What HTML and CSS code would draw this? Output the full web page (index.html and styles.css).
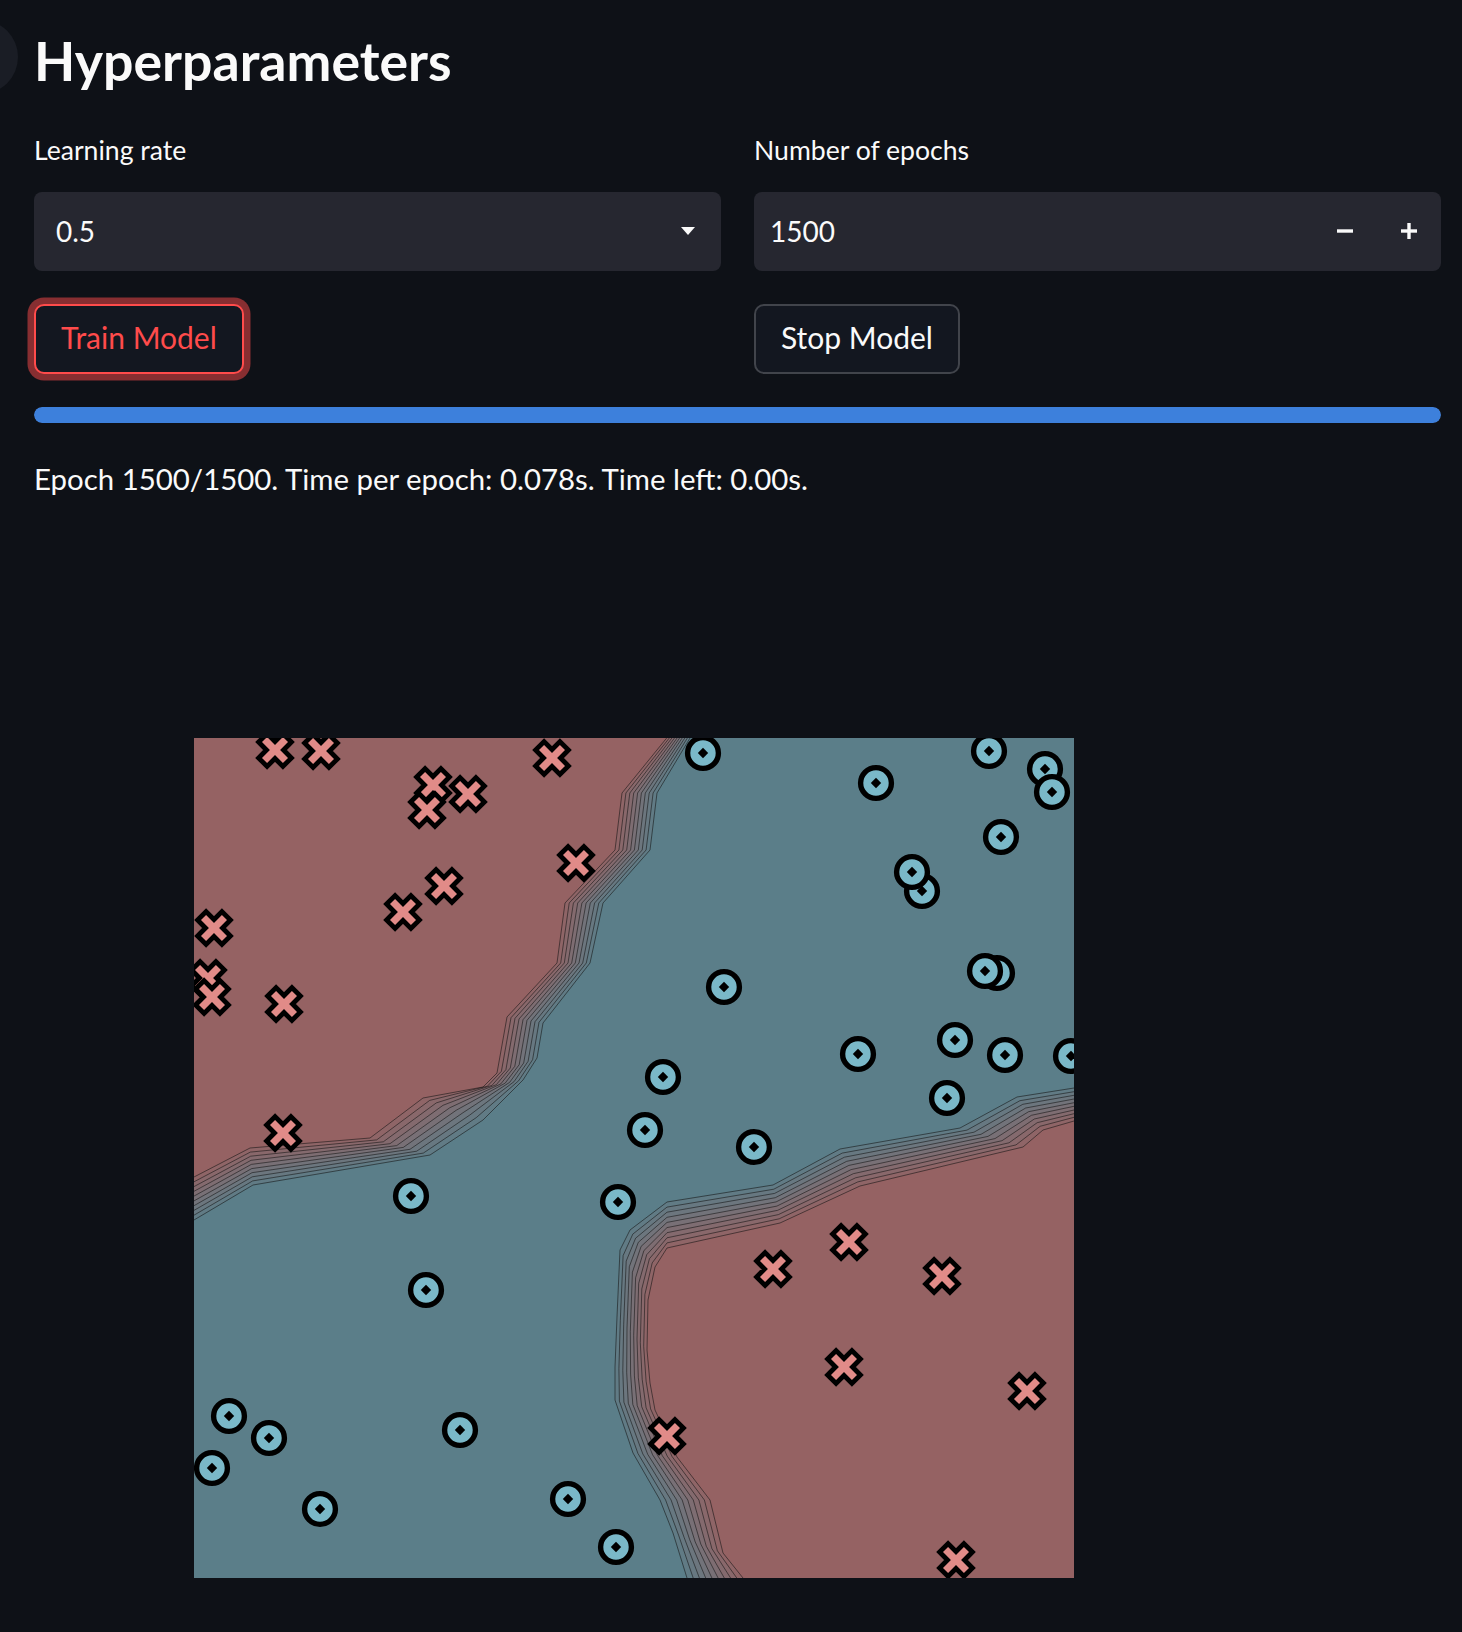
FILE: index.html
```html
<!DOCTYPE html>
<html lang="en">
<head>
<meta charset="utf-8">
<title>Hyperparameters</title>
<link rel="stylesheet" href="styles.css">
</head>
<body>
<div class="app">
  <div class="side-toggle"></div>
  <main class="main">
    <h1 class="title">Hyperparameters</h1>
    <div class="cols">
      <div class="col">
        <label class="label">Learning rate</label>
        <div class="field select">
          <span class="value">0.5</span>
          <svg class="caret" width="14" height="8" viewBox="0 0 14 8"><path d="M0 0H14L7 8Z" fill="#fafafa"/></svg>
        </div>
      </div>
      <div class="col">
        <label class="label">Number of epochs</label>
        <div class="field number">
          <span class="value">1500</span>
          <div class="steppers">
            <span class="step"><svg width="16" height="16" viewBox="0 0 16 16"><rect x="0" y="6.3" width="16" height="3.4" fill="#fafafa"/></svg></span>
            <span class="step"><svg width="16" height="16" viewBox="0 0 16 16"><rect x="0" y="6.3" width="16" height="3.4" fill="#fafafa"/><rect x="6.3" y="0" width="3.4" height="16" fill="#fafafa"/></svg></span>
          </div>
        </div>
      </div>
    </div>
    <div class="cols buttons">
      <div class="col"><button class="btn btn-focus" type="button">Train Model</button></div>
      <div class="col"><button class="btn" type="button">Stop Model</button></div>
    </div>
    <div class="progress"><div class="progress-fill" style="width:100%"></div></div>
    <p class="status">Epoch 1500/1500. Time per epoch: 0.078s. Time left: 0.00s.</p>
    <div class="figure">
      <svg id="plot" class="plot" width="880" height="840" viewBox="0 0 880 840">
        <defs>
          <g id="mx">
            <path d="M3.6-14.8V-3.6H14.8V3.6H3.6V14.8H-3.6V3.6H-14.8V-3.6H-3.6V-14.8Z" transform="rotate(45)" fill="#e18b88" stroke="#000" stroke-width="9.6" stroke-linejoin="miter" paint-order="stroke"/>
          </g>
          <g id="mo">
            <circle r="15.4" fill="#7ab8c8" stroke="#000" stroke-width="5.4"/>
            <path d="M0-5.2L5.2 0 0 5.2-5.2 0Z" fill="#000"/>
          </g>
        </defs>
        <g id="regions"></g>
        <g id="contours"></g>
        <g id="markers"></g>
      </svg>
    </div>
  </main>
</div>
<script src="script.js"></script>
</body>
</html>
```

FILE: styles.css
```css
* {
  box-sizing: border-box;
  margin: 0;
  padding: 0;
}

html,
body {
  background: #0e1117;
}

body {
  width: 1462px;
  min-height: 1632px;
  font-family: Lato, "Noto Sans", sans-serif;
  color: #fafafa;
  position: relative;
  overflow: hidden;
}

.side-toggle {
  position: absolute;
  left: -56px;
  top: 20px;
  width: 74px;
  height: 74px;
  border-radius: 50%;
  background: #1a1d25;
}

.main {
  padding: 29px 21px 0 34px;
}

.title {
  font-size: 53.6px;
  font-weight: 700;
  line-height: 62px;
}

.cols {
  display: grid;
  grid-template-columns: 1fr 1fr;
  column-gap: 33px;
  margin-top: 42px;
}

.label {
  display: block;
  font-size: 26.6px;
  line-height: 34px;
}

.field {
  margin-top: 24.5px;
  height: 79px;
  background: #262730;
  border-radius: 8px;
  display: flex;
  align-items: center;
  font-size: 28px;
}

.select {
  padding: 0 26px 0 22px;
  justify-content: space-between;
}

.number {
  padding-left: 16px;
  justify-content: space-between;
}

.caret {
  display: block;
}

.steppers {
  display: flex;
  height: 100%;
}

.step {
  width: 64px;
  height: 100%;
  display: flex;
  align-items: center;
  justify-content: center;
}

.step svg {
  display: block;
}

.buttons {
  margin-top: 33px;
}

.btn {
  height: 70px;
  padding: 0 25px 3px;
  border: 2px solid rgba(250, 250, 250, 0.2);
  background: #131720;
  color: #fafafa;
  font-family: inherit;
  font-size: 30px;
  border-radius: 10px;
}

.btn-focus {
  border-color: #ff4b4b;
  color: #ff4b4b;
  box-shadow: 0 0 0 6.5px rgba(255, 75, 75, 0.5);
}

.progress {
  margin-top: 33px;
  height: 16px;
  border-radius: 8px;
  background: #262730;
  overflow: hidden;
}

.progress-fill {
  height: 100%;
  background: #3d80dc;
  border-radius: 8px;
}

.status {
  margin-top: 36px;
  font-size: 29.4px;
  line-height: 40px;
}

.figure {
  margin-top: 239px;
  padding-left: 160px;
}

.plot {
  display: block;
  overflow: hidden;
}
```

FILE: script.js
```js
(function () {
  var NS = 'http://www.w3.org/2000/svg';
  var RED = [149, 98, 99];
  var BLUE = [91, 126, 137];
  var N = 10;

  function el(tag, attrs, parent) {
    var e = document.createElementNS(NS, tag);
    for (var k in attrs) e.setAttribute(k, attrs[k]);
    parent.appendChild(e);
    return e;
  }
  function col(t) {
    return 'rgb(' + RED.map(function (c, i) { return Math.round(c + (BLUE[i] - c) * t); }).join(',') + ')';
  }
  function lerpLine(a, b, t) {
    return a.map(function (p, i) { return [p[0] + (b[i][0] - p[0]) * t, p[1] + (b[i][1] - p[1]) * t]; });
  }
  function pathD(pts) {
    return 'M' + pts.map(function (p) { return p[0].toFixed(1) + ' ' + p[1].toFixed(1); }).join('L');
  }

  var bands = [
    {
      red: [[521,-60],[472.7,0],[428,55],[421,112],[371,165],[363,225],[313,279],[303,335],[289,349],[229,360],[176,400],[56,410],[0,439],[-60,470]],
      blue: [[532,-60],[496,0],[463,55],[456,112],[409,165],[396,225],[349,285],[343,320],[329,342],[289,382],[236,417],[59,447],[0,482],[-60,517]],
      corner: [-120, -120]
    },
    {
      red: [[930,368],[880,383],[849,392],[829,409],[666,448],[586,485],[473,510],[461,529],[454,562],[453,612],[456,645],[461,672],[483,719],[516,762],[529,815],[549,840],[589,890]],
      blue: [[930,342],[880,350],[823,359],[766,390],[646,411],[579,447],[473,464],[436,492],[426,512],[423,579],[421,629],[421,662],[439,715],[466,762],[479,795],[493,840],[508,890]],
      corner: [1000, 960]
    }
  ];

  var regions = document.getElementById('regions');
  var contours = document.getElementById('contours');
  var markers = document.getElementById('markers');

  el('rect', { x: 0, y: 0, width: 880, height: 840, fill: col(1) }, regions);

  bands.forEach(function (b) {
    var lines = [];
    for (var k = 0; k < N; k++) lines.push(lerpLine(b.red, b.blue, k / (N - 1)));
    for (var j = N - 1; j >= 0; j--) {
      el('path', { d: pathD(lines[j].concat([b.corner])) + 'Z', fill: col(j / N) }, regions);
    }
    lines.forEach(function (l) {
      el('path', { d: pathD(l), fill: 'none', stroke: '#111', 'stroke-width': 0.75, 'stroke-opacity': 0.75 }, contours);
    });
  });

  var crosses = [
    [81,12],[127,13],[358,20],[239,47],[274,56],[233,72],[382,125],[250,148],[209,174],
    [20,190],[14,240],[18,259],[90,266],[89,395],[579,531],[655,504],[748,538],[650,629],
    [833,653],[473,698],[762,822]
  ];
  var circles = [
    [509,15],[682,45],[795,13],[851,31],[858,54],[807,99],[728,153],[718,134],[803,235],
    [791,233],[530,249],[761,302],[811,317],[877,318],[664,316],[469,339],[451,392],[560,409],
    [753,360],[217,458],[424,464],[232,552],[35,678],[75,700],[18,730],[126,771],[266,692],
    [374,761],[422,809]
  ];

  crosses.forEach(function (p) {
    el('use', { href: '#mx', x: p[0], y: p[1] }, markers);
  });
  circles.forEach(function (p) {
    el('use', { href: '#mo', x: p[0], y: p[1] }, markers);
  });
})();
```
